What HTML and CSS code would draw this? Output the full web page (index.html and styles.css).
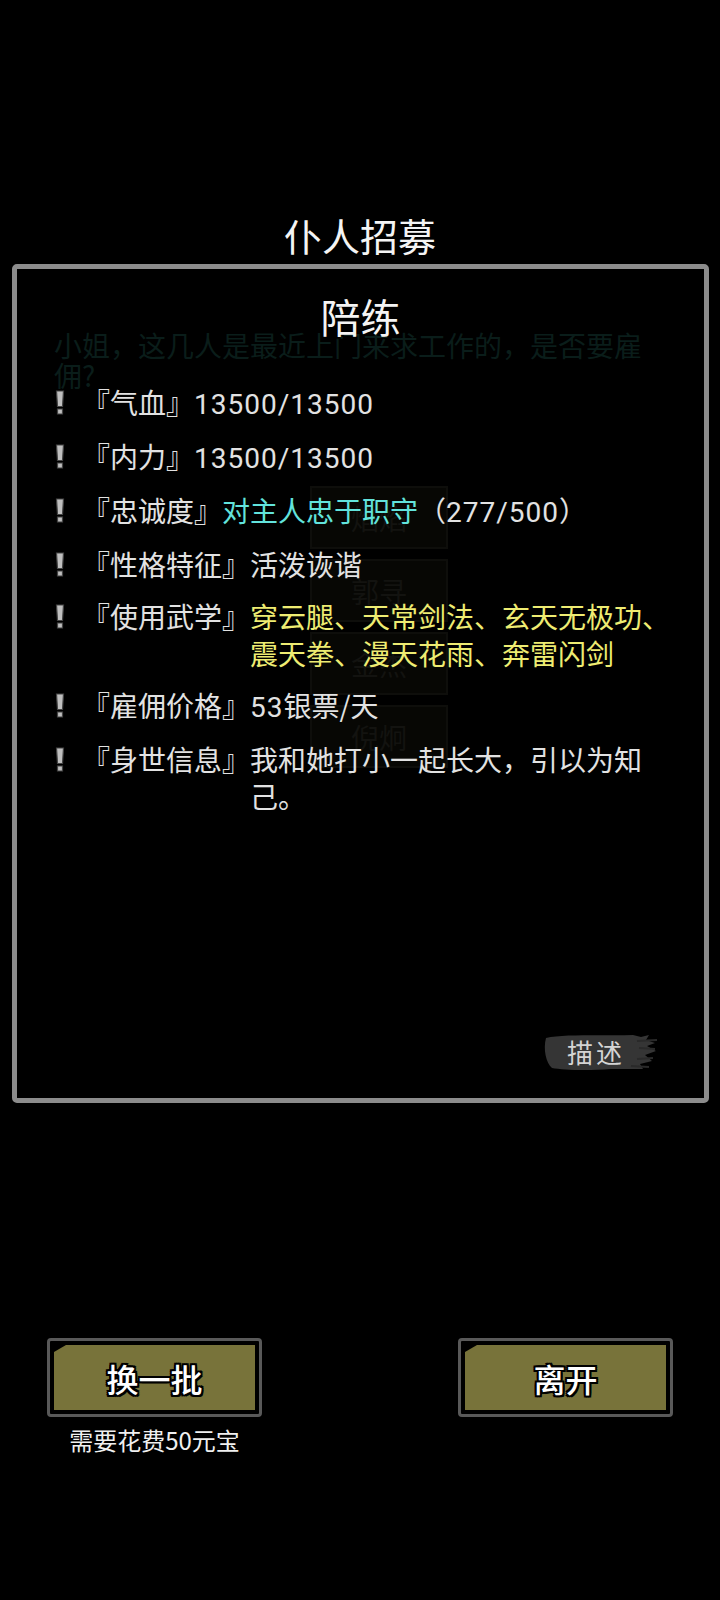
FILE: index.html
```html
<!DOCTYPE html>
<html lang="zh-CN">
<head>
<meta charset="utf-8">
<title>仆人招募</title>
<link rel="stylesheet" href="styles.css">
</head>
<body>
<div class="screen">
  <h1 class="title">仆人招募</h1>

  <div class="stage">
    <div class="backdrop" aria-hidden="true">
      <p class="ghost-text">小姐，这几人是最近上门来求工作的，是否要雇佣?</p>
      <div class="ghost-list">
        <div class="ghost-btn">焰焰</div>
        <div class="ghost-btn">郭寻</div>
        <div class="ghost-btn">金杰</div>
        <div class="ghost-btn">倪炯</div>
      </div>
    </div>

    <section class="panel">
      <h2 class="heading">陪练</h2>

      <div class="rows">
        <div class="row">
          <span class="bang"><svg viewBox="0 0 10 26" width="10" height="26"><path d="M1.5 1 H8.5 L7.5 16.5 H2.5 Z M2.5 19 H7.5 V24 H2.5 Z" fill="#bfbfbf" stroke="#444" stroke-width="1.2"/></svg></span>
          <span class="label"><span class="br">『</span>气血<span class="br">』</span></span>
          <span class="value"><span class="num">13500/13500</span></span>
        </div>
        <div class="row">
          <span class="bang"><svg viewBox="0 0 10 26" width="10" height="26"><path d="M1.5 1 H8.5 L7.5 16.5 H2.5 Z M2.5 19 H7.5 V24 H2.5 Z" fill="#bfbfbf" stroke="#444" stroke-width="1.2"/></svg></span>
          <span class="label"><span class="br">『</span>内力<span class="br">』</span></span>
          <span class="value"><span class="num">13500/13500</span></span>
        </div>
        <div class="row">
          <span class="bang"><svg viewBox="0 0 10 26" width="10" height="26"><path d="M1.5 1 H8.5 L7.5 16.5 H2.5 Z M2.5 19 H7.5 V24 H2.5 Z" fill="#bfbfbf" stroke="#444" stroke-width="1.2"/></svg></span>
          <span class="label"><span class="br">『</span>忠诚度<span class="br">』</span></span>
          <span class="value"><span class="teal">对主人忠于职守</span>（<span class="num">277/500</span>）</span>
        </div>
        <div class="row">
          <span class="bang"><svg viewBox="0 0 10 26" width="10" height="26"><path d="M1.5 1 H8.5 L7.5 16.5 H2.5 Z M2.5 19 H7.5 V24 H2.5 Z" fill="#bfbfbf" stroke="#444" stroke-width="1.2"/></svg></span>
          <span class="label"><span class="br">『</span>性格特征<span class="br">』</span></span>
          <span class="value">活泼诙谐</span>
        </div>
        <div class="row">
          <span class="bang"><svg viewBox="0 0 10 26" width="10" height="26"><path d="M1.5 1 H8.5 L7.5 16.5 H2.5 Z M2.5 19 H7.5 V24 H2.5 Z" fill="#bfbfbf" stroke="#444" stroke-width="1.2"/></svg></span>
          <span class="label"><span class="br">『</span>使用武学<span class="br">』</span></span>
          <span class="value yellow">穿云腿、天常剑法、玄天无极功、<br>震天拳、漫天花雨、奔雷闪剑</span>
        </div>
        <div class="row">
          <span class="bang"><svg viewBox="0 0 10 26" width="10" height="26"><path d="M1.5 1 H8.5 L7.5 16.5 H2.5 Z M2.5 19 H7.5 V24 H2.5 Z" fill="#bfbfbf" stroke="#444" stroke-width="1.2"/></svg></span>
          <span class="label"><span class="br">『</span>雇佣价格<span class="br">』</span></span>
          <span class="value"><span class="num">53</span>银票/天</span>
        </div>
        <div class="row">
          <span class="bang"><svg viewBox="0 0 10 26" width="10" height="26"><path d="M1.5 1 H8.5 L7.5 16.5 H2.5 Z M2.5 19 H7.5 V24 H2.5 Z" fill="#bfbfbf" stroke="#444" stroke-width="1.2"/></svg></span>
          <span class="label"><span class="br">『</span>身世信息<span class="br">』</span></span>
          <span class="value">我和她打小一起长大，引以为知<br>己。</span>
        </div>
      </div>

      <button class="brush-btn" type="button">
        <svg class="brush" viewBox="0 0 116 40" width="116" height="40" aria-hidden="true">
          <path d="M5 6 C22 2 58 4 92 3 L100 5 L108 3 L105 8 L114 11 L106 14 L115 19 L104 23 L111 29 L99 32 L102 37 L70 37 C46 39 22 38 11 36 C5 31 2 17 5 6 Z" fill="#353535"/>
          <path d="M96 9 L116 8 M98 16 L114 17 M96 27 L112 26 M90 34 L108 35" stroke="#2a2a2a" stroke-width="2" fill="none"/>
        </svg>
        <span class="brush-text">描述</span>
      </button>
    </section>
  </div>

  <div class="actions">
    <div class="action">
      <button class="game-btn" type="button"><span class="game-btn-face">换一批</span></button>
      <p class="cost">需要花费50元宝</p>
    </div>
    <div class="action">
      <button class="game-btn" type="button"><span class="game-btn-face">离开</span></button>
    </div>
  </div>
</div>
</body>
</html>
```

FILE: styles.css
```css
* { box-sizing: border-box; }

html, body {
  margin: 0;
  padding: 0;
  background: #000;
}

body {
  width: 720px;
  height: 1600px;
  font-family: "Noto Sans CJK SC", "Noto Sans", sans-serif;
  color: #e6e6e6;
  overflow: hidden;
}

.screen {
  display: flex;
  flex-direction: column;
  padding: 212px 0 0 12px;
}

.title {
  margin: 0 0 6px -12px;
  font-size: 38px;
  line-height: 46px;
  font-weight: 400;
  text-align: center;
  color: #f4f4f4;
}

.stage {
  position: relative;
  width: 697px;
  height: 839px;
}

.backdrop {
  position: absolute;
  inset: 0;
  z-index: 0;
}

.ghost-text {
  position: absolute;
  left: 42px;
  top: 66px;
  width: 600px;
  margin: 0;
  font-size: 28px;
  line-height: 30px;
  color: #0a1d1a;
}

.ghost-list {
  position: absolute;
  left: 298px;
  top: 222px;
  display: flex;
  flex-direction: column;
  gap: 10px;
}

.ghost-btn {
  width: 138px;
  height: 63px;
  border: 2px solid #0e0e0b;
  background: #070704;
  color: #131310;
  font-size: 28px;
  display: flex;
  align-items: center;
  justify-content: center;
}

.panel {
  position: relative;
  z-index: 1;
  width: 100%;
  height: 100%;
  border: 5px solid #8c8c8c;
  border-radius: 5px;
  padding: 23px 24px 26px 33px;
  display: flex;
  flex-direction: column;
}

.heading {
  margin: 0 0 44px -33px;
  font-size: 40px;
  line-height: 48px;
  font-weight: 400;
  text-align: center;
  color: #f4f4f4;
  width: 687px;
}

.rows {
  display: flex;
  flex-direction: column;
  gap: 15px;
}

.row {
  display: flex;
  align-items: flex-start;
  font-size: 28px;
  line-height: 37px;
}

.bang {
  flex: none;
  width: 20px;
  height: 37px;
  margin-right: 12px;
  display: flex;
  align-items: center;
  justify-content: center;
}

.bang svg { display: block; }

.label {
  flex: none;
  color: #e2e2e2;
}

.br {
  font-family: "Noto Sans CJK TC", "Noto Sans CJK SC", sans-serif;
}

.value {
  flex: 1;
  color: #e2e2e2;
}

.num {
  font-family: "Roboto", "Noto Sans CJK SC", sans-serif;
  letter-spacing: 1px;
}

.teal { color: #62e3dc; }
.yellow { color: #eeec72; }

.brush-btn {
  margin-top: auto;
  align-self: flex-end;
  margin-right: 23px;
  position: relative;
  width: 116px;
  height: 40px;
  padding: 0;
  border: 0;
  background: transparent;
  display: flex;
  align-items: center;
  justify-content: center;
  cursor: pointer;
}

.brush {
  position: absolute;
  left: 0;
  top: 0;
}

.brush-text {
  position: relative;
  margin-left: -6px;
  font-family: "Noto Sans CJK SC", sans-serif;
  font-size: 26px;
  line-height: 30px;
  letter-spacing: 3px;
  color: #d4d4d4;
}

.actions {
  display: flex;
  justify-content: space-between;
  margin-top: 235px;
  padding: 0 47px 0 35px;
}

.action {
  display: flex;
  flex-direction: column;
  align-items: center;
}

.game-btn {
  width: 215px;
  height: 79px;
  padding: 4px;
  border: 3px solid #595959;
  border-radius: 4px;
  background: #000;
  display: block;
  cursor: pointer;
}

.game-btn-face {
  display: flex;
  align-items: center;
  justify-content: center;
  width: 100%;
  height: 100%;
  background: #78733a;
  clip-path: polygon(12px 0, 100% 0, 100% 100%, 0 100%, 0 7px);
  font-family: "Noto Sans CJK SC", sans-serif;
  font-size: 32px;
  font-weight: 500;
  color: #fff;
  text-shadow:
    -2px -2px 0 #000, 2px -2px 0 #000, -2px 2px 0 #000, 2px 2px 0 #000,
    0 -2px 0 #000, 0 2px 0 #000, -2px 0 0 #000, 2px 0 0 #000;
}

.cost {
  margin: 10px 0 0;
  font-size: 24px;
  line-height: 26px;
  color: #f0f0f0;
}
```
